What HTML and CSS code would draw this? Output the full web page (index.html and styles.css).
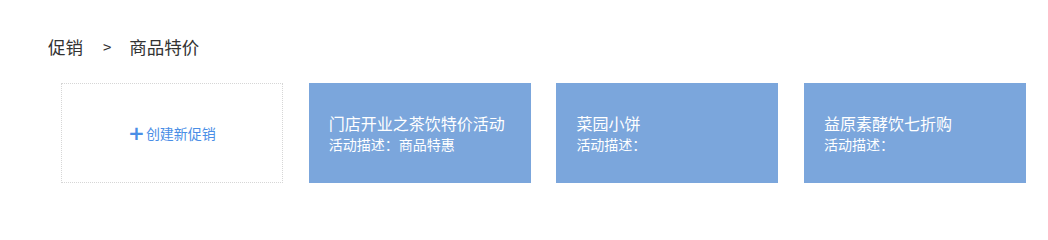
FILE: index.html
```html
<!DOCTYPE html>
<html lang="zh">
<head>
<meta charset="utf-8">
<link rel="stylesheet" href="styles.css">
</head>
<body>
<div class="page">
  <div class="crumb"><span>促销</span><span class="sep">&gt;</span><span>商品特价</span></div>
  <div class="cards">
    <div class="card new"><span class="plus">+</span>创建新促销</div>
    <div class="card promo"><div class="title">门店开业之茶饮特价活动</div><div class="desc">活动描述：商品特惠</div></div>
    <div class="card promo"><div class="title">菜园小饼</div><div class="desc">活动描述：</div></div>
    <div class="card promo"><div class="title">益原素酵饮七折购</div><div class="desc">活动描述：</div></div>
  </div>
</div>
</body>
</html>
```
FILE: styles.css
```css
html, body { margin: 0; padding: 0; background: #fff; }
body { font-family: "Noto Sans CJK SC", "Noto Sans", sans-serif; }
.page { padding: 34px 0 0 48px; }
.crumb { font-size: 17.5px; line-height: 26px; color: #333; display: flex; }
.crumb .sep { margin: 0 18px 0 20px; font-size: 15px; }
.cards { display: grid; grid-template-columns: repeat(4, 222px); column-gap: 25.7px; margin: 23px 0 0 13px; }
.card { height: 100px; box-sizing: border-box; }
.new { border: 1px dotted #d6d6d6; display: flex; align-items: center; justify-content: center; color: #4a8ee6; font-size: 14px; }
.plus { font-size: 20px; font-weight: 700; line-height: 1; margin-right: 1px; font-family: "DejaVu Sans", sans-serif; }
.promo { background: #7ba6dc; color: #fff; display: flex; flex-direction: column; justify-content: center; padding-left: 20px; }
.title { font-size: 16px; line-height: 22px; }
.desc { font-size: 14px; line-height: 20px; }
```
